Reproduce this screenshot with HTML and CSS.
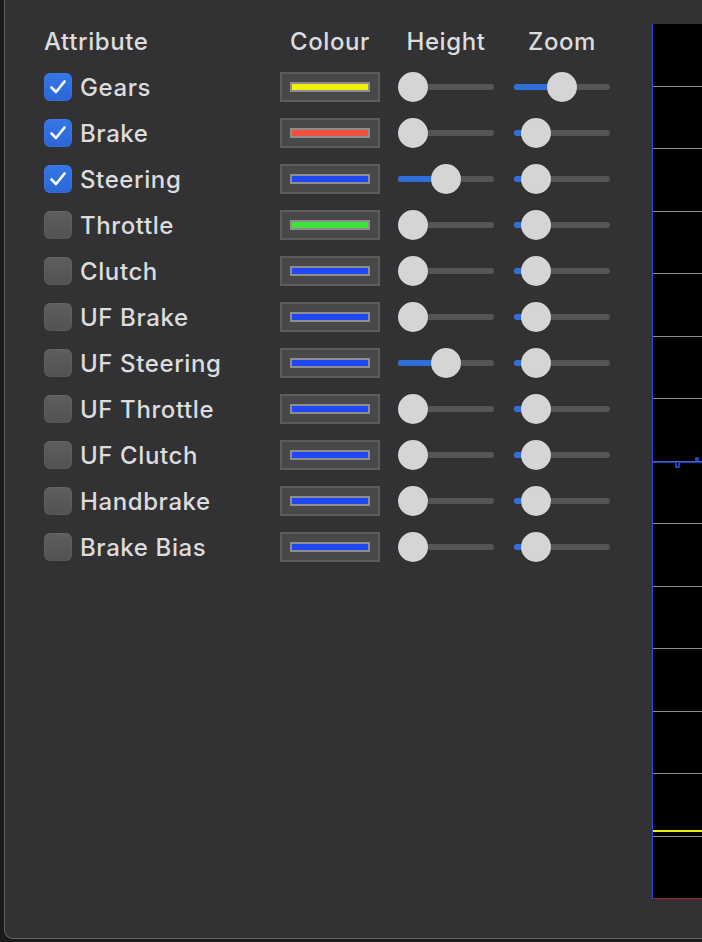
FILE: index.html
```html
<!DOCTYPE html>
<html>
<head>
<meta charset="utf-8">
<link rel="stylesheet" href="styles.css">
</head>
<body>
<div class="window">
  <div class="panel">
    <div class="table">
      <div class="row head">
        <div class="c-attr">Attribute</div>
        <div class="c-col">Colour</div>
        <div class="c-h">Height</div>
        <div class="c-z">Zoom</div>
      </div>
      <div id="rows"></div>
    </div>
    <div class="chart" id="chart">
      <svg class="signal" width="60" height="20" viewBox="0 0 60 20">
        <path d="M0 10 H23 V15 H26 V10 H43 V6 H45 V10 H50 V5 H52 V10 H60" fill="none" stroke="#2b55f0" stroke-width="1.5"/>
      </svg>
      <div class="yellow"></div>
      <div class="red"></div>
    </div>
  </div>
</div>
<script>
var data = [
  ["Gears", true, "#f3ee0c", 0, 0.5],
  ["Brake", true, "#f2503c", 0, 0.106],
  ["Steering", true, "#1f48f5", 0.5, 0.106],
  ["Throttle", false, "#3fe23a", 0, 0.106],
  ["Clutch", false, "#1f48f5", 0, 0.106],
  ["UF Brake", false, "#1f48f5", 0, 0.106],
  ["UF Steering", false, "#1f48f5", 0.5, 0.106],
  ["UF Throttle", false, "#1f48f5", 0, 0.106],
  ["UF Clutch", false, "#1f48f5", 0, 0.106],
  ["Handbrake", false, "#1f48f5", 0, 0.106],
  ["Brake Bias", false, "#1f48f5", 0, 0.106]
];
function slider(v) {
  var left = Math.round(v * 66);
  return '<div class="slider"><div class="track"></div><div class="fill" style="width:' + (left + 15) + 'px"></div><div class="thumb" style="left:' + left + 'px"></div></div>';
}
var html = "";
data.forEach(function (d) {
  html += '<div class="row">' +
    '<div class="c-attr"><span class="cb' + (d[1] ? ' on' : '') + '">' +
    (d[1] ? '<svg width="28" height="28" viewBox="0 0 28 28"><path d="M7.5 14.5 L12 19 L20.5 8.5" fill="none" stroke="#fff" stroke-width="2.6" stroke-linecap="round" stroke-linejoin="round"/></svg>' : '') +
    '</span><span class="label">' + d[0] + '</span></div>' +
    '<div class="c-col"><div class="swatch"><div class="stripe" style="background:' + d[2] + '"></div></div></div>' +
    '<div class="c-h">' + slider(d[3]) + '</div>' +
    '<div class="c-z">' + slider(d[4]) + '</div>' +
    '</div>';
});
document.getElementById("rows").innerHTML = html;
var chart = document.getElementById("chart");
for (var i = 1; i <= 13; i++) {
  var g = document.createElement("div");
  g.className = "gl";
  g.style.top = Math.round(i * 62.5 - 1) + "px";
  chart.insertBefore(g, chart.firstChild);
}
</script>
</body>
</html>
```
FILE: styles.css
```css
html, body {
  margin: 0;
  padding: 0;
  width: 702px;
  height: 942px;
  overflow: hidden;
  background: #1a1a1b;
  font-family: "Inter", "Liberation Sans", sans-serif;
}
.window {
  padding-left: 4px;
  height: 939px;
}
.panel {
  height: 938px;
  background: #323234;
  border-left: 1px solid #616163;
  border-bottom: 1px solid #6a6a6c;
  border-bottom-left-radius: 9px;
  display: flex;
  overflow: hidden;
}
.table {
  padding-top: 18px;
  padding-left: 39px;
  width: 566px;
  flex-shrink: 0;
}
.row {
  display: flex;
  align-items: center;
  height: 46px;
  color: #dcdcde;
  font-size: 24px;
  font-weight: 500;
  letter-spacing: 0.6px;
}
.c-attr {
  width: 236px;
  display: flex;
  align-items: center;
}
.c-col {
  width: 100px;
  margin-right: 18px;
  text-align: center;
}
.c-h {
  width: 96px;
  margin-right: 20px;
  text-align: center;
}
.c-z {
  width: 96px;
  text-align: center;
}
.cb {
  width: 28px;
  height: 28px;
  border-radius: 6px;
  background: linear-gradient(#5e5e60, #525254);
  box-shadow: inset 0 0 0 1px rgba(255,255,255,0.04);
  display: inline-flex;
  flex-shrink: 0;
}
.cb.on {
  background: linear-gradient(#3577e6, #2c66d6);
}
.label {
  margin-left: 8px;
}
.swatch {
  width: 96px;
  height: 26px;
  background: #48484a;
  border: 2px solid #5c5c5e;
  display: flex;
  align-items: center;
  justify-content: center;
}
.stripe {
  width: 76px;
  height: 6px;
  border: 2px solid #8e8e90;
}
.slider {
  position: relative;
  width: 96px;
  height: 30px;
}
.track {
  position: absolute;
  left: 0;
  right: 0;
  top: 12px;
  height: 6px;
  border-radius: 3px;
  background: #555557;
}
.fill {
  position: absolute;
  left: 0;
  top: 12px;
  height: 6px;
  border-radius: 3px;
  background: #2f6fdc;
}
.thumb {
  position: absolute;
  top: 0;
  width: 30px;
  height: 30px;
  border-radius: 50%;
  background: #d5d5d7;
  box-shadow: 0 0 1px rgba(0,0,0,0.4);
}
.chart {
  position: relative;
  margin-left: 42px;
  margin-top: 24px;
  width: 60px;
  height: 875px;
  flex-shrink: 0;
  background: #000;
  border-left: 1.5px solid #2a4fd6;
}
.gl {
  position: absolute;
  left: 0;
  right: 0;
  height: 1px;
  background: #8a8a8c;
}
.signal {
  position: absolute;
  left: 0;
  top: 428px;
}
.yellow {
  position: absolute;
  left: 0;
  right: 0;
  top: 806px;
  height: 2px;
  background: #f1ec10;
}
.red {
  position: absolute;
  left: 0;
  right: 0;
  bottom: 0;
  height: 1px;
  background: #8a3030;
}
```
